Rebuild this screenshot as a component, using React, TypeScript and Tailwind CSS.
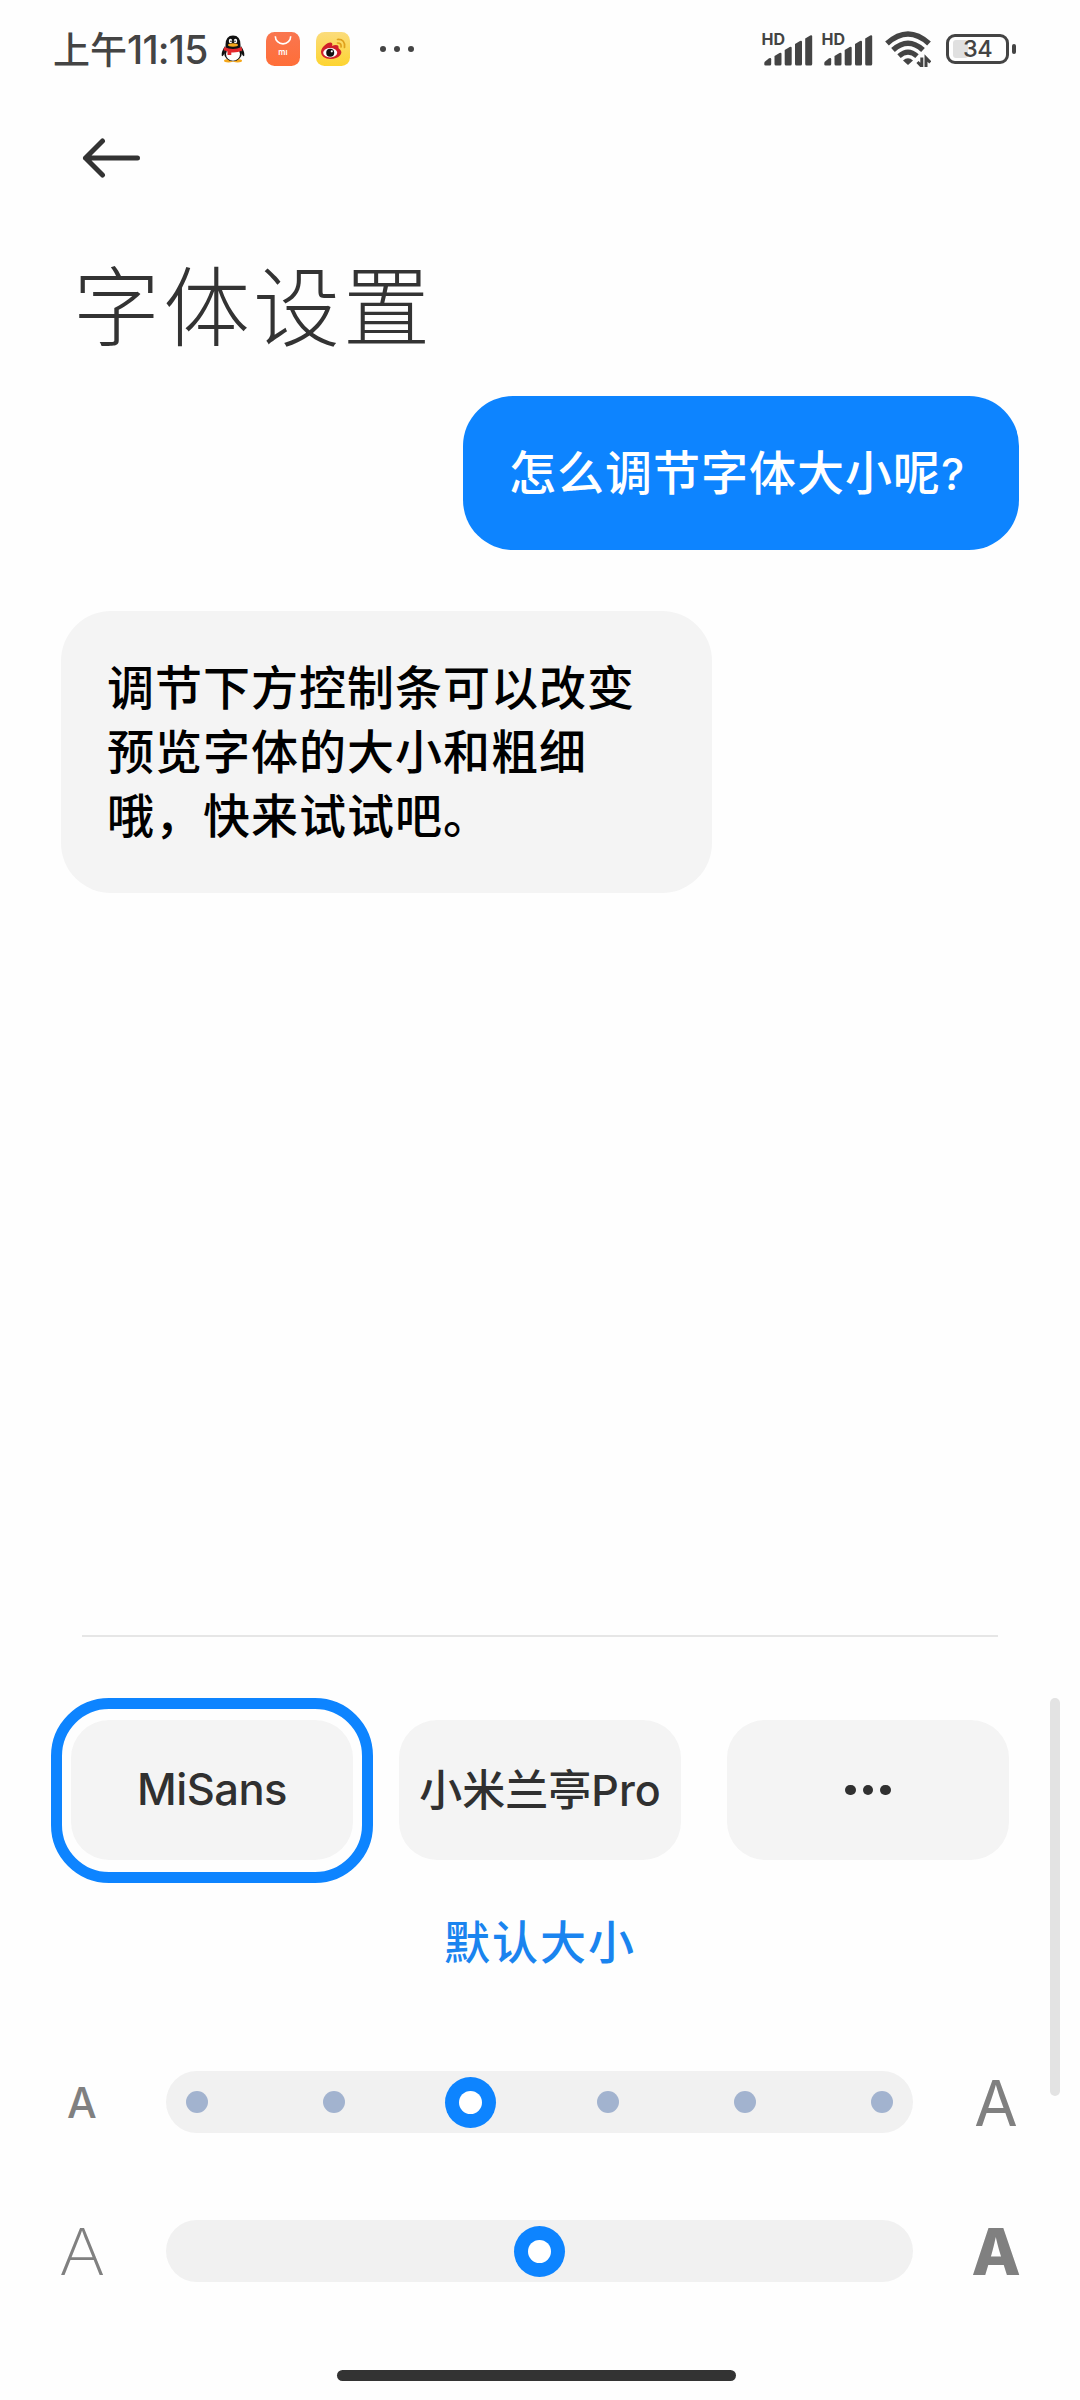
import { useState } from "react";
import type { ReactNode } from "react";

const SIZE_STEPS = [0, 1, 2, 3, 4, 5];

function SignalIcon() {
  return (
    <svg width="50" height="34" viewBox="0 0 50 34" fill="#444444" className="overflow-visible">
      <text x="-0.5" y="13" fontSize="16" fontWeight="700" fontFamily="Inter, sans-serif">
        HD
      </text>
      <path d="M2.5 30l4.500-3.700q2.200-1 2.200 1v4.700q0 1.500-1.500 1.500h-4q-1.500 0-1.500-1.500z" />
      <path d="M12.500 24l5-3q2-.6 2 1v10q0 1.500-1.500 1.500h-4q-1.500 0-1.500-1.500z" />
      <path d="M22.700 18l5-3q2-.6 2 1v16q0 1.500-1.500 1.500h-4q-1.500 0-1.500-1.500z" />
      <path d="M33 12l5-3q2-.6 2 1v22q0 1.500-1.500 1.500h-4q-1.500 0-1.500-1.500z" />
      <path d="M43.200 6.500l5-3q2-.6 2 1v27.500q0 1.500-1.500 1.500h-4q-1.500 0-1.500-1.500z" />
    </svg>
  );
}

function WifiIcon() {
  return (
    <svg width="46" height="36" viewBox="0 0 46 36" fill="none" stroke="#444444">
      <path d="M2 12.500Q23-6.500 44 12.500" strokeWidth="5.500" />
      <path d="M8 19Q23 5.500 38 19" strokeWidth="5.500" />
      <path d="M14 25.200Q23 17 32 25.200" strokeWidth="5" />
      <path d="M18 29.500q5-4.500 10 0l-5 4.500z" fill="#444444" stroke="none" />
      <path d="M36.800 26.500v9l-4.300-4.500M41 36v-9l4.300 4.500" strokeWidth="3" />
    </svg>
  );
}

function Battery() {
  return (
    <div className="flex items-center gap-[3px]">
      <div className="relative flex h-[30px] w-[63px] items-center justify-center rounded-[9px] border-[3px] border-[#444444]">
        <div className="absolute top-[3px] left-[4px] h-[18px] w-[15px] rounded-[3px] bg-[#e0e0e0]" />
        <span className="relative text-[23.500px] leading-none font-medium tracking-[-0.500px]">34</span>
      </div>
      <div className="h-[10px] w-[4px] rounded-[2px] bg-[#444444]" />
    </div>
  );
}

function QQIcon() {
  return (
    <svg width="24" height="28" viewBox="0 0 24 28">
      <ellipse cx="7.500" cy="25.800" rx="4.500" ry="1.700" fill="#f5a81c" />
      <ellipse cx="16.500" cy="25.800" rx="4.500" ry="1.700" fill="#f5a81c" />
      <path d="M4 11Q0 17 .8 21q1 .8 2.700-2.500zM20 11q4 6 3.200 10-1 .8-2.700-2.500z" fill="#111" />
      <ellipse cx="12" cy="17.500" rx="9" ry="8.800" fill="#111" />
      <ellipse cx="12" cy="19" rx="7" ry="6.700" fill="#fff" />
      <path d="M4.500 10Q4.500.5 12 .5T19.500 10v4h-15z" fill="#111" />
      <ellipse cx="9.500" cy="6" rx="1.700" ry="2.300" fill="#fff" />
      <ellipse cx="14.500" cy="6" rx="1.700" ry="2.300" fill="#fff" />
      <circle cx="10" cy="6.200" r=".8" fill="#111" />
      <circle cx="14" cy="6.200" r=".8" fill="#111" />
      <ellipse cx="12" cy="10" rx="5" ry="1.700" fill="#f5a81c" />
      <path d="M3.500 12q8.500 4 17 0l.8 3.500q-5 2.500-11 2v2.500H6.500v-3.500L2.500 15z" fill="#e4282d" />
    </svg>
  );
}

function MiStoreIcon() {
  return (
    <svg width="34" height="34" viewBox="0 0 34 34">
      <defs>
        <linearGradient id="store" x1="0" y1="0" x2="0" y2="1">
          <stop offset="0" stopColor="#f97650" />
          <stop offset="1" stopColor="#ff6e38" />
        </linearGradient>
      </defs>
      <rect width="34" height="34" rx="8.500" fill="url(#store)" />
      <path d="M9.300 4.200a7.700 7.700 0 0 0 15.400 0" fill="none" stroke="#fff" strokeWidth="1.600" />
      <text x="17" y="23" textAnchor="middle" fontSize="8" fontWeight="600" fontFamily="Inter, sans-serif" fill="#fff">
        mı
      </text>
    </svg>
  );
}

function WeiboIcon() {
  return (
    <svg width="34" height="34" viewBox="0 0 34 34">
      <defs>
        <linearGradient id="weibo" x1="0" y1="0" x2="0" y2="1">
          <stop offset="0" stopColor="#fbdc7c" />
          <stop offset="1" stopColor="#fdd430" />
        </linearGradient>
      </defs>
      <rect width="34" height="34" rx="8.500" fill="url(#weibo)" />
      <path d="M5 19.500c.5-4.500 6.500-9.500 9.800-9 1.800.3 1.800 1.800 1.200 3.500 3-1.500 7-1.500 6.500 1.500-.2 1 .5 1.200 1.500 2 4 3.500-1 9.500-9.500 9.500-5.500 0-9.800-3-9.500-7.500z" fill="#d0202a" />
      <ellipse cx="14.200" cy="20.800" rx="7" ry="4.700" fill="#fff" />
      <circle cx="14.200" cy="20.800" r="4" fill="#111" />
      <circle cx="15.800" cy="19.300" r="1.100" fill="#fff" />
      <path d="M21.500 11q4-.2 3.600 4M21.500 7.500q8-.5 7 8" fill="none" stroke="#dfa01c" strokeWidth="1.700" strokeLinecap="round" />
    </svg>
  );
}

function StatusBar() {
  return (
    <div className="flex h-[98px] items-center justify-between pr-[64px] pl-[53px] text-[#444444]">
      <div className="flex items-center">
        <span className="w-[168px] text-[37px] leading-none font-medium whitespace-nowrap">
          上午<span className="text-[39px] tracking-[-0.800px]">11:15</span>
        </span>
        <QQIcon />
        <div className="ml-[21px] flex gap-4">
          <MiStoreIcon />
          <WeiboIcon />
        </div>
        <div className="ml-[30px] flex gap-2">
          <i className="size-[6px] rounded-full bg-[#444444]" />
          <i className="size-[6px] rounded-full bg-[#444444]" />
          <i className="size-[6px] rounded-full bg-[#444444]" />
        </div>
      </div>
      <div className="flex items-center">
        <SignalIcon />
        <div className="ml-[10px]">
          <SignalIcon />
        </div>
        <div className="mr-[15px] ml-[13px]">
          <WifiIcon />
        </div>
        <Battery />
      </div>
    </div>
  );
}

function FontCard({ selected, onClick, children }: { selected: boolean; onClick: () => void; children: ReactNode }) {
  return (
    <button
      onClick={onClick}
      className="relative flex h-[140px] w-[282px] items-center justify-center rounded-[38px] bg-[#f4f4f4] text-[#303030]"
    >
      {selected && <span className="absolute -inset-x-[20px] -top-[22px] -bottom-[23px] rounded-[58px] border-[11px] border-[#0d84ff]" />}
      {children}
    </button>
  );
}

function Thumb() {
  return (
    <span className="flex size-[51px] shrink-0 items-center justify-center rounded-full bg-[#0d84ff]">
      <span className="size-[23px] rounded-full bg-white" />
    </span>
  );
}

export default function App() {
  const [font, setFont] = useState("MiSans");
  const [step, setStep] = useState(2);

  return (
    <div className="flex h-[2400px] w-[1080px] flex-col overflow-hidden bg-[#fefefe] font-['Inter','Noto_Sans_CJK_SC',sans-serif]">
      <StatusBar />

      <header className="h-[298px] pt-[40px] pl-[73px]">
        <svg className="ml-[9px]" width="60" height="41" viewBox="0 0 60 41" fill="none" stroke="#333333" strokeWidth="5" strokeLinecap="round" strokeLinejoin="round">
          <path d="M20.500 3L3.500 20l17 17M3.500 20h52" />
        </svg>
        <h1 className="mt-[72px] text-[87px] leading-[116px] font-light tracking-[3px] text-[#333333]">字体设置</h1>
      </header>

      <main className="flex h-[1239px] flex-col gap-[61px] pr-[61px] pl-[61px] text-[47px] leading-[64px] font-medium tracking-[1px]">
        <p className="h-[154px] w-[556px] self-end rounded-[50px] bg-[#0d84ff] pt-[45px] pl-[46px] whitespace-nowrap text-white">
          怎么调节字体大小呢<span className="text-[44px]">?</span>
        </p>
        <p className="h-[282px] w-[651px] rounded-[50px] bg-[#f4f4f4] pt-[45px] pl-[46px] whitespace-nowrap text-black">
          调节下方控制条可以改变
          <br />
          预览字体的大小和粗细
          <br />
          哦，快来试试吧。
        </p>
      </main>

      <hr className="mr-[82px] ml-[82px] border-t-2 border-[#e6e6e6]" />

      <section className="flex h-[434px] justify-between pt-[61px] pr-[20px] pl-[71px]">
        <div className="w-[938px] pt-[22px]">
          <div className="flex gap-[46px]">
            <FontCard selected={font === "MiSans"} onClick={() => setFont("MiSans")}>
              <span className="text-[43.500px] font-[450] tracking-[-0.500px]">MiSans</span>
            </FontCard>
            <FontCard selected={font === "Lanting"} onClick={() => setFont("Lanting")}>
              <span className="text-[43px] font-[450] whitespace-nowrap">小米兰亭Pro</span>
            </FontCard>
            <FontCard selected={font === "more"} onClick={() => setFont("more")}>
              <span className="flex gap-[7px]">
                <i className="size-[10.500px] rounded-full bg-[#303030]" />
                <i className="size-[10.500px] rounded-full bg-[#303030]" />
                <i className="size-[10.500px] rounded-full bg-[#303030]" />
              </span>
            </FontCard>
          </div>
          <p className="mt-[50px] text-center text-[46px] leading-[64px] font-medium tracking-[2px] text-[#1a84ef]">默认大小</p>
        </div>
        <div className="h-[398px] w-[10px] rounded-full bg-[#e3e3e3]" />
      </section>

      <section className="flex flex-col gap-[87px] pr-[54px] pl-[52px] text-[#808080]">
        <div className="flex h-[62px] items-center justify-between">
          <span className="w-[60px] pt-px text-center text-[42px] leading-none font-medium">A</span>
          <div className="flex h-[62px] w-[747px] items-center justify-between rounded-full bg-[#f1f1f1] px-[5.500px]">
            {SIZE_STEPS.map((s) => (
              <button key={s} onClick={() => setStep(s)} className="flex size-[51px] items-center justify-center">
                {s === step ? <Thumb /> : <span className="size-[22px] rounded-full bg-[#a2b3cf]" />}
              </button>
            ))}
          </div>
          <span className="w-[60px] pt-[2px] text-center text-[63px] leading-none">A</span>
        </div>
        <div className="flex h-[62px] items-center justify-between">
          <span className="w-[60px] pt-[2px] text-center text-[64px] leading-none font-extralight">
            <span className="inline-block scale-x-110">A</span>
          </span>
          <div className="flex h-[62px] w-[747px] items-center justify-center rounded-full bg-[#f1f1f1]">
            <Thumb />
          </div>
          <span className="w-[60px] pt-[2px] text-center text-[64px] leading-none font-extrabold">A</span>
        </div>
      </section>

      <div className="mt-[88px] ml-[337px] h-[11px] w-[399px] rounded-full bg-[#333333]" />
    </div>
  );
}
